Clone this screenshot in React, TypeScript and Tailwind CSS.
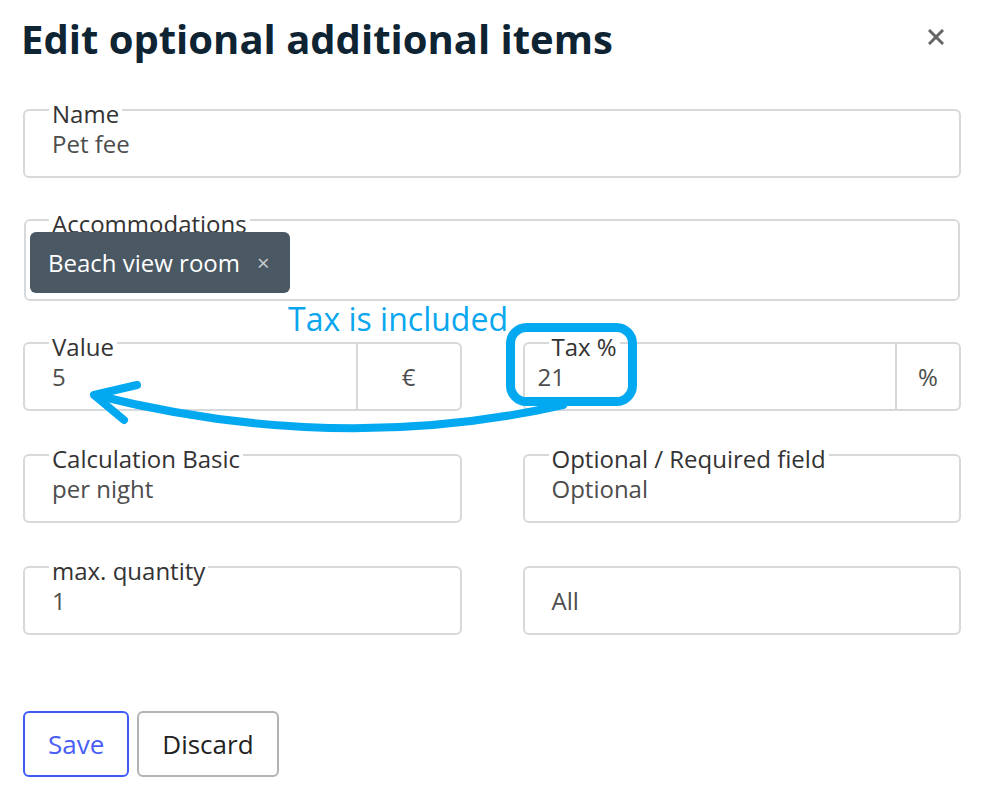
import type { ReactNode } from 'react';

function Field({ label, children, className = '' }: { label?: string; children: ReactNode; className?: string }) {
  return (
    <div className={`relative h-[69px] rounded-md border-2 border-[#d6d9dc] flex ${className}`}>
      {label && (
        <span className="absolute left-[24px] -top-[12px] bg-white px-[3px] text-[24px] leading-[30px] text-[#333]">
          {label}
        </span>
      )}
      {children}
    </div>
  );
}

function Value({ children, pad = 'pl-[27px]' }: { children: ReactNode; pad?: string }) {
  return <div className={`flex-1 pt-[18px] ${pad} text-[24px] leading-[30px] text-[#4d4d4d]`}>{children}</div>;
}

export default function App() {
  return (
    <div className="relative w-[984px] h-[794px] overflow-hidden bg-white font-['Open_Sans',sans-serif]">
      <div className="px-[23px] pt-[15px]">
        {/* Header */}
        <div className="flex items-start justify-between">
          <h1 className="text-[40px] leading-[48px] font-bold text-[#0f2433] -ml-[2px]">Edit optional additional items</h1>
          <button className="mt-[14px] mr-[17px] w-4 h-4 text-[#666]" aria-label="Close">
            <svg viewBox="0 0 16 16" className="w-4 h-4">
              <path d="M2 2L14 14M14 2L2 14" stroke="currentColor" strokeWidth="3" strokeLinecap="square" />
            </svg>
          </button>
        </div>

        {/* Name */}
        <Field label="Name" className="mt-[46px]">
          <Value>Pet fee</Value>
        </Field>

        {/* Accommodations */}
        <div className="relative mt-[41px] mx-px h-[82px] rounded-md border-2 border-[#d6d9dc] pt-[11px] pl-[4px] pb-[6px]">
          <span className="absolute left-[23px] -top-[12px] bg-white px-[3px] text-[24px] leading-[30px] text-[#333]">
            Accommodations
          </span>
          <div className="relative inline-flex h-[61px] items-center gap-[17px] rounded-md bg-[#4a5863] pl-[18px] pr-[20px] text-[24px] text-white">
            <span>Beach view room</span>
            <span className="text-[22px] text-[#c9ced3]">×</span>
          </div>
        </div>

        <div className="mt-[41px] grid grid-cols-2 gap-x-[61px] gap-y-[43px]">
          <Field label="Value">
            <Value>5</Value>
            <div className="w-[104px] border-l-2 border-[#d6d9dc] flex items-center justify-center text-[24px] text-[#4d4d4d]">€</div>
          </Field>
          <Field label="Tax %">
            <Value pad="pl-[13px]">21</Value>
            <div className="w-[64px] border-l-2 border-[#d6d9dc] flex items-center justify-center text-[24px] text-[#4d4d4d]">%</div>
          </Field>
          <Field label="Calculation Basic">
            <Value>per night</Value>
          </Field>
          <Field label="Optional / Required field">
            <Value>Optional</Value>
          </Field>
          <Field label="max. quantity">
            <Value>1</Value>
          </Field>
          <Field>
            <Value>All</Value>
          </Field>
        </div>

        {/* Actions */}
        <div className="mt-[76px] flex gap-[8px]">
          <button className="h-[66px] rounded-md border-2 border-[#3f5cf4] px-[23px] text-[26px] text-[#4a5ef5]">Save</button>
          <button className="h-[66px] rounded-md border-2 border-[#b3b3b3] px-[23px] text-[26px] text-[#222]">Discard</button>
        </div>
      </div>

      {/* Annotation overlay */}
      <span className="absolute left-[288px] top-[299px] text-[32px] leading-[40px] text-[#0aa7ef]">Tax is included</span>
      <svg className="pointer-events-none absolute inset-0" width="984" height="794" viewBox="0 0 984 794">
        <rect x="510.5" y="327.5" width="122" height="74" rx="16" fill="none" stroke="#03a9f0" strokeWidth="9" />
        <path d="M563 405 Q337 456 95 395" fill="none" stroke="#03a9f0" strokeWidth="8" strokeLinecap="round" />
        <path d="M137 385 L94 395 L124 420" fill="none" stroke="#03a9f0" strokeWidth="8" strokeLinecap="round" strokeLinejoin="round" />
      </svg>
    </div>
  );
}
